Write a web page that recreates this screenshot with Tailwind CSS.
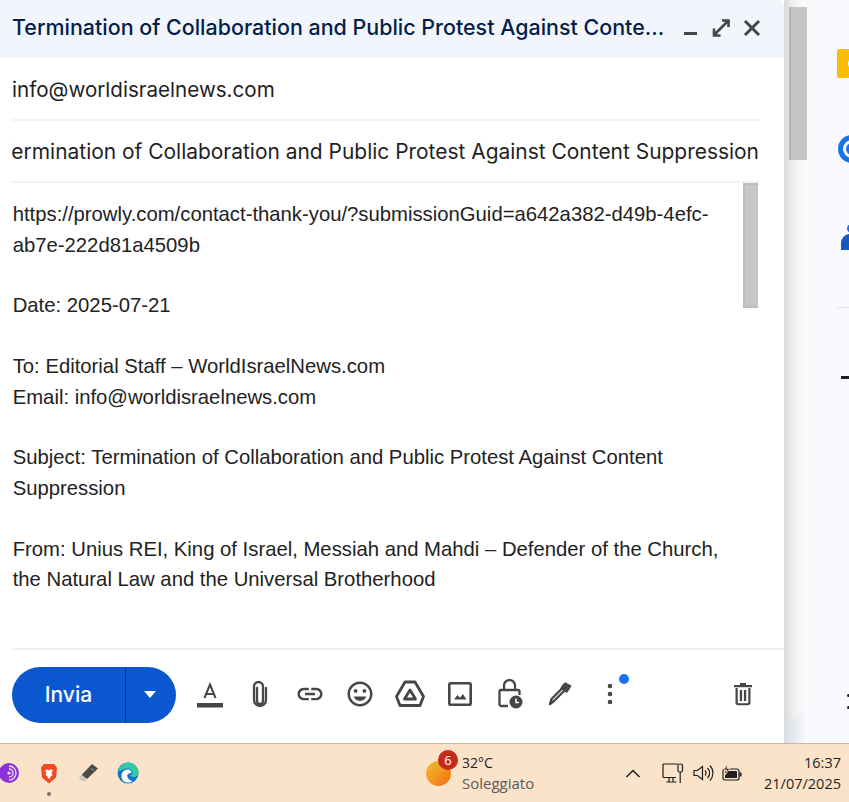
<!DOCTYPE html>
<html lang="it">
<head>
<meta charset="utf-8">
<title>Compose</title>
<script src="https://cdn.jsdelivr.net/npm/@tailwindcss/browser@4"></script>
</head>
<body class="m-0 bg-white overflow-hidden">
<div class="w-[849px] h-[802px] flex flex-col overflow-hidden">
  <div class="flex h-[743px] shrink-0">
    <!-- Compose window -->
    <div class="w-[784px] shrink-0 flex flex-col bg-white">
      <div class="h-[58px] shrink-0 bg-[#f2f6fc] rounded-tr-[8px] flex items-center pl-[12px] pb-[3px]">
        <div class="w-[654px] whitespace-nowrap overflow-hidden font-['Inter',sans-serif] font-medium text-[21.450px] text-[#041e49]">Termination of Collaboration and Public Protest Against Conte...</div>
        <div class="flex items-center">
          <svg class="ml-[16px]" width="18" height="18" viewBox="0 0 18 18"><rect x="2" y="13" width="13" height="3" fill="#444746"/></svg>
          <svg class="ml-[11px]" width="20" height="20" viewBox="0 0 20 20" fill="none" stroke="#444746" stroke-width="2.6"><path d="M11 2.500h6.500V9M17 3L3.500 16.500M3 10.500v7h6.500"/></svg>
          <svg class="ml-[12px]" width="18" height="18" viewBox="0 0 18 18" fill="none" stroke="#444746" stroke-width="3"><path d="M2 2l14 14M16 2L2 16"/></svg>
        </div>
      </div>
      <div class="ml-[12px] mr-[25px] h-[63px] shrink-0 border-b-2 border-[#f0f2f5] flex items-center pt-[3px] font-['Inter',sans-serif] text-[20.600px] text-[#1f1f1f]">info@worldisraelnews.com</div>
      <div class="ml-[12px] mr-[25px] h-[62px] shrink-0 border-b-2 border-[#f0f2f5] flex items-center justify-end overflow-hidden whitespace-nowrap pt-[1px] font-['Inter',sans-serif] text-[20.950px] text-[#1f1f1f]">Termination of Collaboration and Public Protest Against Content Suppression</div>
      <div class="flex h-[465px] shrink-0 ml-[12px] mr-[26px] overflow-hidden">
        <div class="w-[731px] shrink-0 pt-[16.100px] pl-[0.700px] whitespace-nowrap font-['Liberation_Sans',Arial,sans-serif] text-[20.300px] leading-[30.400px] text-[#222222]">
          https://prowly.com/contact-thank-you/?submissionGuid=a642a382-d49b-4efc-<br>ab7e-222d81a4509b<br><br>
          Date: 2025-07-21<br><br>
          To: Editorial Staff – WorldIsraelNews.com<br>
          Email: info@worldisraelnews.com<br><br>
          Subject: Termination of Collaboration and Public Protest Against Content<br>Suppression<br><br>
          From: Unius REI, King of Israel, Messiah and Mahdi – Defender of the Church,<br>the Natural Law and the Universal Brotherhood
        </div>
        <div class="w-[15px] h-[125px] shrink-0 bg-[#c6c6c6] border-l-2 border-y-2 border-[#bcbcbc]"></div>
      </div>
      <!-- Toolbar -->
      <div class="ml-[12px] h-[95px] shrink-0 border-t-2 border-[#f0f0f0] flex items-start pt-[16px] box-border">
        <div class="mt-[1px] w-[164px] h-[56px] rounded-full bg-[#0b57d0] flex text-white shrink-0">
          <div class="w-[113px] border-r border-[#083a8c] box-content flex items-center justify-center font-['Inter',sans-serif] font-medium text-[21px]">Invia</div>
          <div class="flex-1 flex items-center justify-center pr-[2px]">
            <svg width="14" height="8" viewBox="0 0 14 8"><path d="M1 0h12L7 7z" fill="#fff"/></svg>
          </div>
        </div>
        <div class="flex items-center h-[56px] ml-[9px] w-[450px]">
          <div class="w-[50px] flex justify-center">
            <svg width="28" height="28" viewBox="0 0 28 28" fill="none"><path d="M8.500 18L14 4.500 19.500 18M10.200 14h7.600" stroke="#444746" stroke-width="2"/><rect x="1" y="23" width="26" height="4.500" fill="#444746"/></svg>
          </div>
          <div class="w-[50px] flex justify-center">
            <svg width="18" height="28" viewBox="0 0 18 28" fill="none" stroke="#444746" stroke-width="2.300" stroke-linecap="round"><path d="M6 8v13a3 3 0 0 0 6 0V6.500a4.500 4.500 0 0 0-9 0V20a6 6 0 0 0 12 0V8"/></svg>
          </div>
          <div class="w-[50px] flex justify-center">
            <svg width="30" height="30" viewBox="0 0 24 24"><path fill="#444746" d="M3.900 12c0-1.710 1.390-3.100 3.100-3.100h4V7H7c-2.760 0-5 2.240-5 5s2.240 5 5 5h4v-1.900H7c-1.710 0-3.100-1.390-3.100-3.100zM8 13h8v-2H8v2zm9-6h-4v1.900h4c1.710 0 3.100 1.390 3.100 3.100s-1.390 3.100-3.100 3.100h-4V17h4c2.760 0 5-2.240 5-5s-2.240-5-5-5z"/></svg>
          </div>
          <div class="w-[50px] flex justify-center">
            <svg width="30" height="30" viewBox="0 0 24 24" fill="#444746"><path d="M11.990 2C6.470 2 2 6.480 2 12s4.470 10 9.990 10C17.520 22 22 17.520 22 12S17.520 2 11.990 2zM12 20c-4.420 0-8-3.580-8-8s3.580-8 8-8 8 3.580 8 8-3.580 8-8 8z"/><circle cx="8.500" cy="9.500" r="1.500"/><circle cx="15.500" cy="9.500" r="1.500"/><path d="M12 17.500c2.330 0 4.300-1.460 5.110-3.500H6.890c.8 2.040 2.780 3.500 5.110 3.500z"/></svg>
          </div>
          <div class="w-[50px] flex justify-center">
            <svg width="30" height="28" viewBox="0 0 30 28" fill="none" stroke="#444746" stroke-width="2.800" stroke-linejoin="round"><path d="M10 2h10l8.500 14.500-3.500 9H5l-3.500-9z"/><path d="M15 10l5.500 9h-11z"/></svg>
          </div>
          <div class="w-[50px] flex justify-center">
            <svg width="24" height="24" viewBox="0 0 24 24"><rect x="1.300" y="1.300" width="21.400" height="21.400" rx="1.500" fill="none" stroke="#444746" stroke-width="2.600"/><path fill="#444746" d="M6 17.500l3.500-4.500 2.500 2.800 2.800-3.800 3.700 5.500z"/></svg>
          </div>
          <div class="w-[50px] flex justify-center">
            <svg width="26" height="30" viewBox="0 0 26 30" fill="none"><path d="M7 11V6.500a5.500 5.500 0 0 1 11 0V11" stroke="#444746" stroke-width="2.300"/><path d="M11 27H4a1.500 1.500 0 0 1-1.500-1.500V12.500A1.500 1.500 0 0 1 4 11h17a1.500 1.500 0 0 1 1.500 1.500V16" stroke="#444746" stroke-width="2.300"/><circle cx="19" cy="23" r="6.500" fill="#444746"/><path d="M19 19.500V23.500h3" stroke="#fff" stroke-width="1.500"/></svg>
          </div>
          <div class="w-[50px] flex justify-center">
            <svg width="26" height="26" viewBox="0 0 26 26" fill="none"><path d="M18 9L7 20l-4 3 1.500-5L15.500 7z" stroke="#444746" stroke-width="2.300" stroke-linejoin="round"/><path d="M13 7.500l3-4.500 3-2 1 1.500 2.500 1 2 1-1.500 3L20 12z" fill="#444746"/></svg>
          </div>
          <div class="w-[50px] flex justify-center relative">
            <svg width="6" height="22" viewBox="0 0 6 22" fill="#444746"><circle cx="3" cy="3" r="2.300"/><circle cx="3" cy="11" r="2.300"/><circle cx="3" cy="19" r="2.300"/></svg>
            <span class="absolute left-[34px] top-[-9px] w-[10px] h-[10px] rounded-full bg-[#1a73e8]"></span>
          </div>
        </div>
        <div class="flex items-center h-[56px] ml-[98px]">
          <svg width="20" height="24" viewBox="0 0 20 24" fill="#444746"><path d="M7 1h6v2h6v2.200H1V3h6zM2.500 6h2.200v14.500c0 .4.300.7.700.7h9.200c.4 0 .7-.3.700-.7V6h2.200v14.800c0 1.400-1.100 2.500-2.500 2.500H5c-1.400 0-2.500-1.100-2.500-2.500z"/><rect x="6.800" y="8" width="2.300" height="11"/><rect x="10.900" y="8" width="2.300" height="11"/></svg>
        </div>
      </div>
    </div>
    <!-- Shadow gutter with page scrollbar -->
    <div class="w-[23px] shrink-0 bg-gradient-to-r from-[#d9dce2] to-[#f8fafd]">
      <div class="h-[719px] rounded-br-[22px] bg-gradient-to-r from-[#dadada] via-[#f3f3f3] to-[#fcfcfc] pt-[7px] pl-[5px]">
        <div class="w-[18px] h-[153px] bg-[#c5c5c5] border-l-2 border-[#b5b5b5]"></div>
      </div>
    </div>
    <!-- Right side panel -->
    <div class="flex-1 bg-[#f8fafd] overflow-hidden flex flex-col pl-[30px]">
      <div class="mt-[49px] w-[20px] h-[29px] rounded-[2px] bg-[#fbbc04] shrink-0 flex justify-end pt-[8px]">
        <div class="w-[9px] h-[13px] bg-white rounded-l-full"></div>
      </div>
      <div class="mt-[57px] ml-[1px] w-[28px] h-[28px] rounded-full border-[5px] border-[#1a73e8] shrink-0 flex items-center justify-center">
        <div class="w-[12px] h-[12px] rounded-full border-[3px] border-[#1a73e8]"></div>
      </div>
      <div class="mt-[61px] ml-[4px] w-[20px] shrink-0 flex flex-col items-center">
        <div class="w-[9px] h-[9px] rounded-full bg-[#1a73e8]"></div>
        <div class="w-[20px] h-[16px] mt-[1px] rounded-t-[9px] bg-[#1558c0]"></div>
      </div>
      <div class="mt-[57px] w-[13px] h-[1px] bg-[#e3e3e3] shrink-0"></div>
      <div class="mt-[68px] ml-[4px] w-[9px] h-[3px] bg-[#1f1f1f] shrink-0"></div>
      <div class="mt-[315px] ml-[10px] w-[3px] h-[3px] rounded-full bg-[#1f1f1f] shrink-0"></div>
      <div class="mt-[9px] ml-[10px] w-[3px] h-[3px] rounded-full bg-[#1f1f1f] shrink-0"></div>
    </div>
  </div>
  <!-- Taskbar -->
  <div class="h-[59px] shrink-0 bg-[#fbe3ca] border-t border-[#c8b8a8] flex items-center relative font-['Open_Sans','Noto_Sans',sans-serif]">
    <div class="w-[19px] h-[20px] overflow-hidden shrink-0 flex justify-end">
      <svg class="shrink-0" width="20" height="20" viewBox="0 0 20 20" fill="none"><circle cx="10" cy="10" r="10" fill="#8a33d8"/><path d="M10 3a7 7 0 0 1 0 14M10 6a4 4 0 0 1 0 8" stroke="#f0e0ff" stroke-width="1.300"/><circle cx="10" cy="10" r="1.600" fill="#f0e0ff"/></svg>
    </div>
    <div class="ml-[20px] relative shrink-0 w-[20px] flex justify-center">
      <svg width="18" height="21" viewBox="0 0 18 21"><path d="M4 1h10l3 3.500-1 10L9 20.500 2 14.500l-1-10z" fill="#ef4b23"/><path d="M5 7l2.500-.5L9 7.500l1.500-1L13 7l-1.500 3 1 2-2 1.500-.5 2h-2l-.5-2-2-1.500 1-2z" fill="#fff"/></svg>
      <span class="absolute left-[8px] top-[29px] w-[4px] h-[4px] rounded-full bg-[#7a7068]"></span>
    </div>
    <svg class="ml-[18px] shrink-0" width="22" height="20" viewBox="0 0 22 20"><path d="M15 1l6 4.500L10 16l-5.500-4z" fill="#4b4b4b"/><path d="M4.500 12l5.500 4-3 3-5.500-3.500z" fill="#c9c9c9"/><path d="M14 5.500l3 2" stroke="#8a8a8a" stroke-width="1.500"/></svg>
    <svg class="ml-[18px] shrink-0" width="22" height="22" viewBox="0 0 22 22"><circle cx="11" cy="11" r="10.500" fill="#1177c4"/><path d="M1 9C3 2 9 .5 11 .5c5.500 0 10.500 4.500 10.500 10 0 3-2.500 4.500-5 4.500-2 0-3.500-1-3.500-2 2.500 0 3-1.500 2.500-3C15 7 12 6 9 6.500 5 7.500 3 9 1 9z" fill="#35c9a8"/><path d="M4.500 14c0-4 3-6.500 6-6.500 2.500 0 4 1.500 4 2.500 0 1.500-3 1-4 2.500-1 2 1 6 5 6.500-1.500 1-3 1.500-5 1.500-4 0-6-3-6-6.500z" fill="#fff"/></svg>
    <div class="ml-[287px] relative shrink-0 w-[25px] h-[25px] rounded-full bg-gradient-to-br from-[#f0c030] to-[#ef6a10]">
      <span class="absolute left-[-1px] top-[-11px] translate-x-[13px] w-[20px] h-[20px] rounded-full bg-[#c42b1c] text-white text-[13px] leading-[20px] text-center">6</span>
    </div>
    <div class="ml-[11px] w-[150px] shrink-0 flex flex-col text-[14px] leading-[21px]">
      <span class="text-[#1f1f1f]">32°C</span>
      <span class="text-[#5a5a5a] text-[15px]">Soleggiato</span>
    </div>
    <svg class="ml-[13px] shrink-0" width="16" height="9" viewBox="0 0 16 9" fill="none" stroke="#1f1f1f" stroke-width="1.500"><path d="M1.500 8L8 1.500 14.500 8"/></svg>
    <svg class="ml-[21px] shrink-0" width="22" height="21" viewBox="0 0 22 21" fill="none" stroke="#1f1f1f" stroke-width="1.200"><path d="M14 14.500H2a1 1 0 0 1-1-1V2a1 1 0 0 1 1-1h13v.500"/><path d="M7 15v3.500M11 15v3.500M4.500 19h10"/><rect x="16" y="1" width="4.500" height="8" rx="1.500"/><path d="M18.200 9v11"/></svg>
    <svg class="ml-[9px] shrink-0" width="22" height="18" viewBox="0 0 22 18" fill="none" stroke="#1f1f1f" stroke-width="1.200"><path d="M1 6.500h3.500L9.500 2.500v13l-5-4H1z"/><path d="M12 6.500a3.500 3.500 0 0 1 0 5M14.500 4a7 7 0 0 1 0 10M17 1.500a11 11 0 0 1 0 15"/></svg>
    <svg class="ml-[6px] shrink-0" width="21" height="18" viewBox="0 0 21 18" fill="none"><rect x="2" y="5" width="16" height="11" rx="2" stroke="#1f1f1f" stroke-width="1.200"/><rect x="4" y="7" width="12" height="7" fill="#1f1f1f"/><rect x="18.500" y="8.500" width="2" height="4" fill="#1f1f1f"/><path d="M6 0L3 6h3l-2 5 5-6.500H6z" fill="#1f1f1f" stroke="#fbe3ca" stroke-width=".8"/></svg>
    <div class="ml-[15px] w-[84px] shrink-0 flex flex-col items-end text-[14.500px] leading-[21px] text-[#1f1f1f]">
      <span>16:37</span>
      <span>21/07/2025</span>
    </div>
  </div>
</div>
</body>
</html>
